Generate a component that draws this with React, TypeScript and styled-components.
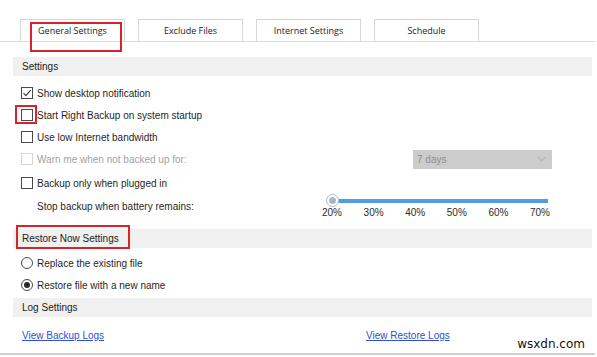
import React from "react";
import styled, { createGlobalStyle } from "styled-components";

const GlobalStyle = createGlobalStyle`
  html, body {
    margin: 0;
    padding: 0;
    background: #ffffff;
  }
  body {
    font-family: "Liberation Sans", Arial, sans-serif;
    font-size: 10px;
    color: #1f1f1f;
  }
`;

const Page = styled.div`
  position: relative;
  width: 597px;
  height: 357px;
  padding-top: 19px;
  box-sizing: border-box;
  overflow: hidden;
`;

const TabBar = styled.div`
  display: flex;
  gap: 13px;
  padding-left: 20px;
  margin-right: 2px;
  border-bottom: 1px solid #dcdcdc;
`;

const Tab = styled.div`
  position: relative;
  width: 105px;
  height: 22px;
  box-sizing: border-box;
  border: 1px solid #d6d6d6;
  border-bottom: none;
  display: flex;
  align-items: center;
  justify-content: center;
  font-family: "Open Sans", sans-serif;
  font-size: 9px;
  color: #222;
`;

// red annotation boxes drawn over the screenshot
const Highlight = styled.span<{ $top: number; $left: number; $w: number; $h: number }>`
  position: absolute;
  top: ${({ $top }) => $top}px;
  left: ${({ $left }) => $left}px;
  width: ${({ $w }) => $w}px;
  height: ${({ $h }) => $h}px;
  box-sizing: border-box;
  border: 2px solid #d8232a;
  pointer-events: none;
`;

const Panel = styled.div`
  margin: 15px 5px 0 13px;
`;

const SectionHeader = styled.div<{ $gap?: number }>`
  position: relative;
  height: 19px;
  line-height: 19px;
  padding-left: 9px;
  margin-top: ${({ $gap }) => $gap ?? 0}px;
  background: #f0f0f0;
  color: #222;
`;

const Options = styled.div<{ $gap: number }>`
  padding-left: 8px;
  margin-top: ${({ $gap }) => $gap}px;
`;

const Row = styled.div<{ $after?: number; $h?: number }>`
  display: flex;
  align-items: center;
  gap: 4px;
  height: ${({ $h }) => $h ?? 22}px;
  margin-bottom: ${({ $after }) => $after ?? 0}px;
`;

const Label = styled.span<{ $disabled?: boolean; $indent?: number }>`
  color: ${({ $disabled }) => ($disabled ? "#a2a2a2" : "#1f1f1f")};
  padding-left: ${({ $indent }) => $indent ?? 0}px;
`;

const Box = styled.span<{ $disabled?: boolean }>`
  position: relative;
  display: inline-flex;
  width: 12px;
  height: 12px;
  box-sizing: border-box;
  border: 1px solid ${({ $disabled }) => ($disabled ? "#d4d4d4" : "#4a4a4a")};
  background: #fff;
  flex-shrink: 0;
`;

const Radio = styled.span<{ $on?: boolean }>`
  display: inline-flex;
  align-items: center;
  justify-content: center;
  width: 12px;
  height: 12px;
  box-sizing: border-box;
  border-radius: 50%;
  border: 1px solid #4a4a4a;
  flex-shrink: 0;
  &::after {
    content: "";
    width: 6px;
    height: 6px;
    border-radius: 50%;
    background: ${({ $on }) => ($on ? "#2a2a2a" : "transparent")};
  }
`;

const Select = styled.div`
  margin-left: auto;
  margin-right: 40px;
  width: 139px;
  height: 19px;
  background: #cccccc;
  display: flex;
  align-items: center;
  justify-content: space-between;
  padding: 0 6px 0 4px;
  box-sizing: border-box;
  color: #8c8c8c;
  font-size: 10px;
`;

const Slider = styled.div`
  margin-left: auto;
  margin-right: 42px;
  width: 228px;
  display: flex;
  flex-direction: column;
  align-self: flex-start;
  padding-top: 5px;
`;

const Track = styled.div`
  position: relative;
  height: 4px;
  margin: 0 2px 0 5px;
  background: #4f9de6;
`;

const Thumb = styled.span`
  position: absolute;
  left: -1px;
  top: -5px;
  width: 13px;
  height: 13px;
  box-sizing: border-box;
  border-radius: 50%;
  border: 1px solid #a9bccc;
  background: #fff;
  display: flex;
  align-items: center;
  justify-content: center;
  &::after {
    content: "";
    width: 7px;
    height: 7px;
    border-radius: 50%;
    background: #aab6c0;
  }
`;

const Ticks = styled.div`
  display: flex;
  justify-content: space-between;
  margin-top: 4px;
  color: #2a2a2a;
  font-size: 10px;
`;

const LinkRow = styled.div`
  display: grid;
  grid-template-columns: 344px auto;
  align-items: center;
  height: 22px;
  padding-left: 9px;
  margin-top: 7px;
`;

const LogLink = styled.a`
  color: #2f4fd0;
  text-decoration: underline;
  cursor: pointer;
`;

const BottomLine = styled.div`
  margin: 7px 2px 0 0;
  height: 2px;
  background: #cfcfcf;
`;

const Watermark = styled.span`
  position: absolute;
  right: 12px;
  bottom: 6px;
  font-family: "DejaVu Sans", sans-serif;
  font-size: 12px;
  color: #111;
  background: #fff;
`;

const Check = () => (
  <svg width="10" height="10" viewBox="0 0 10 10" style={{ position: "absolute", left: 0, top: 0 }}>
    <path d="M1.5 5.2 L4 7.6 L8.6 2.2" fill="none" stroke="#3a3a3a" strokeWidth="1.1" />
  </svg>
);

const Chevron = () => (
  <svg width="9" height="6" viewBox="0 0 9 6">
    <path d="M0.5 0.8 L4.5 4.8 L8.5 0.8" fill="none" stroke="#ababab" strokeWidth="1" />
  </svg>
);

const tabs = ["General Settings", "Exclude Files", "Internet Settings", "Schedule"];
const ticks = ["20%", "30%", "40%", "50%", "60%", "70%"];

const App = () => {
  return (
    <Page>
      <GlobalStyle />
      <TabBar>
        {tabs.map((t, i) => (
          <Tab key={t}>
            {t}
            {i === 0 && <Highlight $top={2} $left={9} $w={92} $h={30} />}
          </Tab>
        ))}
      </TabBar>
      <Panel>
        <SectionHeader>Settings</SectionHeader>
        <Options $gap={6}>
          <Row>
            <Box><Check /></Box>
            <Label>Show desktop notification</Label>
          </Row>
          <Row>
            <Box>
              <Highlight $top={-5} $left={-7} $w={22} $h={19} />
            </Box>
            <Label>Start Right Backup on system startup</Label>
          </Row>
          <Row>
            <Box />
            <Label>Use low Internet bandwidth</Label>
          </Row>
          <Row $after={2}>
            <Box $disabled />
            <Label $disabled>Warn me when not backed up for:</Label>
            <Select>
              <span>7 days</span>
              <Chevron />
            </Select>
          </Row>
          <Row>
            <Box />
            <Label>Backup only when plugged in</Label>
          </Row>
          <Row $h={24}>
            <Label $indent={16}>Stop backup when battery remains:</Label>
            <Slider>
              <Track>
                <Thumb />
              </Track>
              <Ticks>
                {ticks.map((t) => (
                  <span key={t}>{t}</span>
                ))}
              </Ticks>
            </Slider>
          </Row>
        </Options>
        <SectionHeader $gap={11}>
          Restore Now Settings
          <Highlight $top={-4} $left={3} $w={114} $h={24} />
        </SectionHeader>
        <Options $gap={4}>
          <Row>
            <Radio />
            <Label>Replace the existing file</Label>
          </Row>
          <Row>
            <Radio $on />
            <Label>Restore file with a new name</Label>
          </Row>
        </Options>
        <SectionHeader $gap={2}>Log Settings</SectionHeader>
        <LinkRow>
          <span><LogLink>View Backup Logs</LogLink></span>
          <span><LogLink>View Restore Logs</LogLink></span>
        </LinkRow>
      </Panel>
      <BottomLine />
      <Watermark>wsxdn.com</Watermark>
    </Page>
  );
};

export default App;
